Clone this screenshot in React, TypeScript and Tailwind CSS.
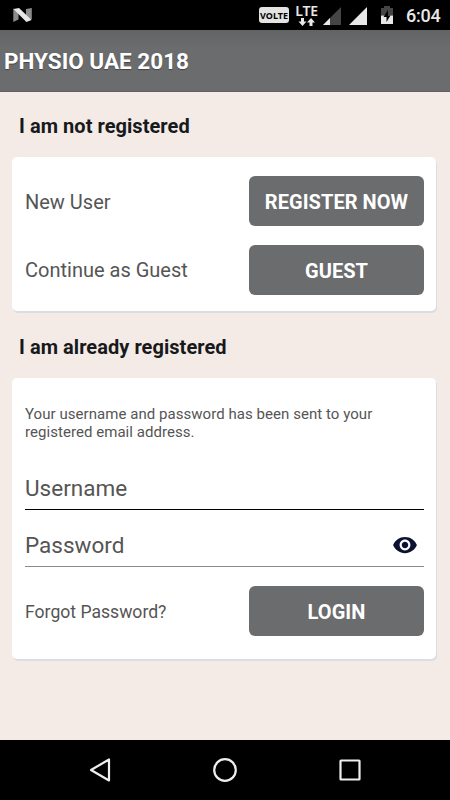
import type { ReactNode } from "react";

const StatusBar = () => {
  return (
    <div className="flex h-[30px] items-center bg-black pl-[13px] pr-[10px] text-[#e8e8e8]">
      <svg width="20" height="16" viewBox="0 0 20 16">
        <path d="M0.3 1.5L5.5 4V12.5L0.3 15Z" fill="#8b8b8b" />
        <path d="M13 2L18.8 1V12.5L13 10Z" fill="#8b8b8b" />
        <path d="M0.5 2L6 1L18.6 13L13.4 15Z" fill="#e6e6e6" />
      </svg>
      <div className="ml-auto flex h-4 w-[30px] items-center justify-center rounded-[3px] bg-[#e3e3e3] font-['Noto_Sans',sans-serif] text-[9px] font-bold leading-none text-black">
        VOLTE
      </div>
      <div className="ml-[6px] flex h-[21px] w-[23px] flex-col items-center">
        <span className="font-['Noto_Sans',sans-serif] text-[14px] font-semibold leading-[12px] tracking-[-0.2px]">
          LTE
        </span>
        <svg width="17" height="8" viewBox="0 0 17 8" fill="#e8e8e8" className="mt-px">
          <path d="M3 0H6V3.5H8.5L4.5 8L0.5 3.5H3Z" />
          <path d="M11.5 8H14.5V4.5H17L13 0L9 4.5H11.5Z" />
        </svg>
      </div>
      <svg width="18" height="18" viewBox="0 0 18 18" className="ml-[5px] mt-[2px]">
        <path d="M0 18L18 0V18Z" fill="#454545" />
        <path d="M0 18L7 11V18Z" fill="#e8e8e8" />
      </svg>
      <svg width="18" height="18" viewBox="0 0 18 18" className="ml-[8px] mt-[2px]">
        <path d="M0 18L18 0V18Z" fill="#e8e8e8" />
      </svg>
      <svg width="12" height="18" viewBox="0 0 12 18" className="ml-[14px]">
        <path d="M0 2H3V0H9V2H12V9.5H0Z" fill="#454545" />
        <path d="M0 9.5H12V18H0Z" fill="#e8e8e8" />
        <path d="M7 4L2.5 11H5.5V16L9.5 9.5H7Z" fill="#000" />
      </svg>
      <span className="ml-[13px] mt-[2px] w-[34px] text-[18px] font-medium leading-none tracking-[-0.2px]">
        6:04
      </span>
    </div>
  );
};

const Card = ({ children }: { children: ReactNode }) => {
  return (
    <div className="ml-3 mr-[14px] rounded-[5px] bg-white pl-[13px] pr-3 shadow-[1px_2px_0_#dadde3]">
      {children}
    </div>
  );
};

const Heading = ({ children }: { children: ReactNode }) => {
  return (
    <h2 className="pl-[19px] text-[20px] font-bold leading-6 tracking-[0.05px] text-[#17191b]">
      {children}
    </h2>
  );
};

const Button = ({ children }: { children: ReactNode }) => {
  return (
    <button className="h-[50px] w-[175px] rounded-[6px] bg-[#6b6c6e] pt-px text-[20px] font-bold tracking-[0.05px] text-white">
      {children}
    </button>
  );
};

const NavBar = () => {
  return (
    <div className="flex h-[60px] items-center justify-between bg-black px-[88px]">
      <svg width="24" height="26" viewBox="0 0 24 26" fill="none">
        <path
          d="M21 2.5V23.5L3 13Z"
          stroke="#eee"
          strokeWidth="2.2"
          strokeLinejoin="round"
        />
      </svg>
      <svg width="24" height="24" viewBox="0 0 24 24" fill="none">
        <circle cx="12" cy="12" r="10.8" stroke="#eee" strokeWidth="2.2" />
      </svg>
      <svg width="24" height="24" viewBox="0 0 24 24" fill="none">
        <rect
          x="2.5"
          y="2.5"
          width="19"
          height="19"
          rx="0.5"
          stroke="#eee"
          strokeWidth="2.2"
        />
      </svg>
    </div>
  );
};

const App = () => {
  return (
    <div className="flex h-[800px] w-[450px] flex-col overflow-hidden bg-[#f4ebe6] font-[Roboto,sans-serif] text-[#555]">
      <StatusBar />
      <header className="flex h-[62px] items-center border-b border-[#5f6062] bg-linear-to-b from-[#626365] to-[#6b6c6e] to-30% pl-1 pt-[3px]">
        <h1 className="text-[22.5px] font-bold text-white [text-shadow:0_1px_1px_#444]">
          PHYSIO UAE 2018
        </h1>
      </header>

      <main className="flex-1 pt-[22px]">
        <Heading>I am not registered</Heading>
        <div className="h-[19px]" />
        <Card>
          <div className="flex h-[154px] flex-col gap-[19px] pt-[19px] text-[20px]">
            <div className="flex items-center justify-between">
              <span className="pt-px">New User</span>
              <Button>REGISTER NOW</Button>
            </div>
            <div className="flex items-center justify-between">
              <span>Continue as Guest</span>
              <Button>GUEST</Button>
            </div>
          </div>
        </Card>

        <div className="h-6" />
        <Heading>I am already registered</Heading>
        <div className="h-[19px]" />
        <Card>
          <div className="h-[281px] pt-[27px]">
            <p className="text-[15px] leading-[18px] tracking-[0.05px]">
              Your username and password has been sent to your
              <br />
              registered email address.
            </p>
            <div className="mt-[28px] flex h-[41px] items-center border-b border-black pb-px text-[22.5px]">
              Username
            </div>
            <div className="mt-4 flex h-[41px] items-center justify-between border-b border-[#8a8a8a] pr-[6px] text-[22.5px]">
              <span className="pb-px">Password</span>
              <svg width="26" height="26" viewBox="0 0 24 24" fill="#0b1232" className="mb-[3px]">
                <path d="M12 4.5C7 4.5 2.73 7.61 1 12c1.73 4.39 6 7.5 11 7.5s9.27-3.11 11-7.5c-1.73-4.39-6-7.5-11-7.5zM12 17c-2.76 0-5-2.24-5-5s2.24-5 5-5 5 2.24 5 5-2.24 5-5 5zm0-8c-1.66 0-3 1.34-3 3s1.34 3 3 3 3-1.34 3-3-1.34-3-3-3z" />
              </svg>
            </div>
            <div className="mt-[19px] flex items-center justify-between text-[17.6px]">
              <span className="pt-[2px]">Forgot Password?</span>
              <Button>LOGIN</Button>
            </div>
          </div>
        </Card>
      </main>

      <NavBar />
    </div>
  );
};

export default App;
